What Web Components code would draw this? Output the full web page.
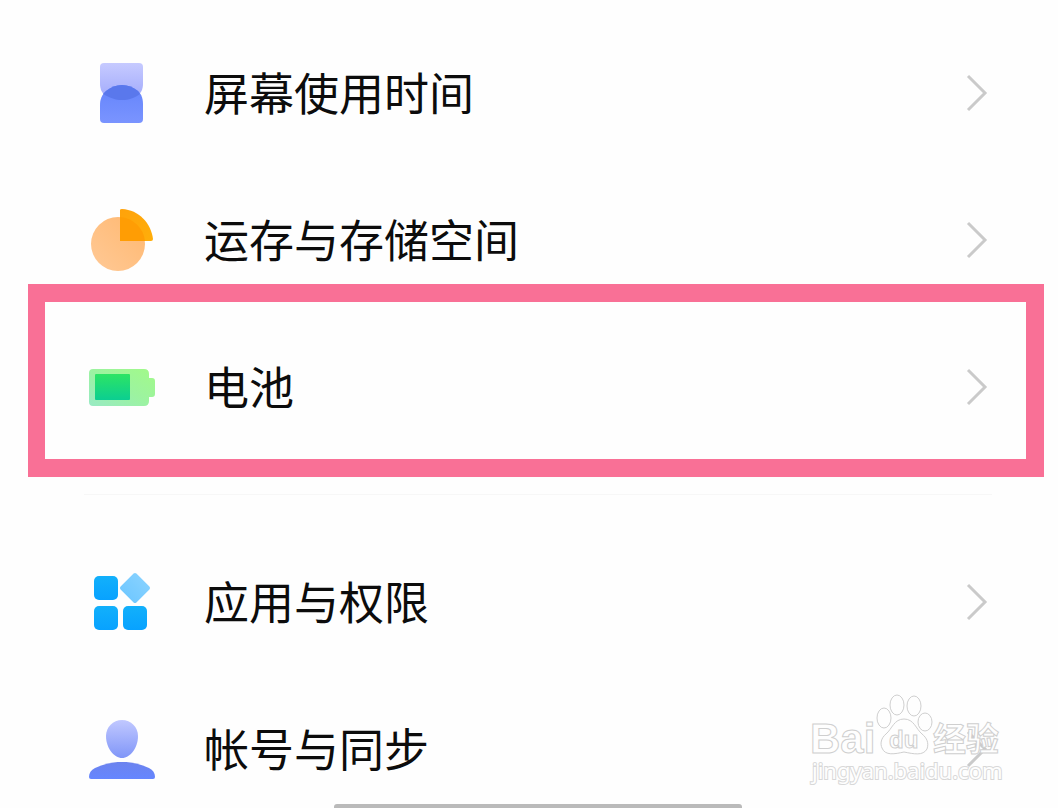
<!DOCTYPE html>
<html lang="zh-CN">
<head>
<meta charset="utf-8">
<meta name="viewport" content="width=device-width, initial-scale=1">
<title>设置</title>
<style>
html, body { margin: 0; height: 100%; }
body { background: #fefefe; color: #0c0c0c; overflow: hidden; font-family: "Noto Sans CJK SC", sans-serif; }
</style>
</head>
<body>
<settings-page>
  <settings-row icon="time">屏幕使用时间</settings-row>
  <settings-row icon="storage">运存与存储空间</settings-row>
  <settings-row icon="battery" marked>电池</settings-row>
  <settings-divider></settings-divider>
  <settings-row icon="apps">应用与权限</settings-row>
  <settings-row icon="account">帐号与同步</settings-row>
  <site-watermark slot="overlay"></site-watermark>
</settings-page>
<script>
const ICONS = {
  time: `<defs><linearGradient id="a" x2="0" y2="1"><stop stop-color="#c6caff"/><stop offset="1" stop-color="#a0a9fb"/></linearGradient>
    <linearGradient id="b" x2="0" y2="1"><stop stop-color="#6484fb"/><stop offset="1" stop-color="#7a94ff"/></linearGradient></defs>
    <path fill="url(#a)" d="M20 8H55Q59 8 59 12V29C59 34 57 38 54 40C49 43 45 45 38 45S27 43 21 40C18 38 16 34 16 29V12Q16 8 20 8Z"/>
    <path fill="url(#b)" d="M16 64V50C16 44 18 40 22 36C27 32 32 30 38 30S49 32 54 36C58 40 59 44 59 50V64Q59 68 55 68H20Q16 68 16 64Z"/>
    <path fill="#5a78ec" d="M22 36C27 32 32 30 38 30S49 32 54 36L56 39C50 43 45 45 38 45S27 43 19 39Z"/>`,
  storage: `<defs><linearGradient id="a" x1="1" x2="0" y2="1"><stop stop-color="#ffb870"/><stop offset="1" stop-color="#ffc996"/></linearGradient>
    <linearGradient id="b" x2="1" y2="1"><stop stop-color="#ffa20a"/><stop offset="1" stop-color="#ffae0a"/></linearGradient></defs>
    <circle cx="34" cy="42" r="27" fill="url(#a)"/>
    <path fill="url(#b)" d="M36 8Q36 7 38 7C55 8 67 21 69 37Q69 39 67 39H36Z"/>
    <path fill="#ff9d04" d="M36 15A27 27 0 0 1 61 39H36Z"/>`,
  battery: `<defs><linearGradient id="a" x1="1" x2="0" y2="1"><stop stop-color="#a2fa88"/><stop offset=".5" stop-color="#9cf3a0"/><stop offset="1" stop-color="#98eac4"/></linearGradient>
    <linearGradient id="b" x2="0" y2="1"><stop stop-color="#2de464"/><stop offset="1" stop-color="#0bce91"/></linearGradient></defs>
    <path fill="url(#a)" d="M9 20H60Q65 20 65 25V29H68Q71 29 71 32V45Q71 48 68 48H65V52Q65 57 60 57H9Q5 57 5 53V24Q5 20 9 20Z"/>
    <rect x="11" y="25" width="35" height="26" rx="1" fill="url(#b)"/>`,
  apps: `<defs><linearGradient id="a" x2="0" y2="1"><stop stop-color="#12b0fb"/><stop offset="1" stop-color="#08a2ff"/></linearGradient>
    <linearGradient id="b" x1="1" x2="0" y2="1"><stop stop-color="#8ad3ff"/><stop offset="1" stop-color="#6cc6ff"/></linearGradient></defs>
    <g fill="url(#a)"><rect x="10" y="12" width="24" height="24" rx="5"/><rect x="10" y="42" width="24" height="24" rx="5"/><rect x="39" y="42" width="24" height="24" rx="5"/></g>
    <path fill="url(#b)" stroke="url(#b)" stroke-width="4" stroke-linejoin="round" d="M51 11L64 24L51 37L38 24Z"/>`,
  account: `<defs><linearGradient id="a" x2="0" y2="1"><stop stop-color="#c1c8ff"/><stop offset="1" stop-color="#8096f8"/></linearGradient>
    <linearGradient id="b" x2="0" y2="1"><stop stop-color="#6c83ee"/><stop offset="1" stop-color="#6586ff"/></linearGradient></defs>
    <path fill="url(#a)" d="M38 9C47 9 54 16 54 25C54 37 46 47 38 47S22 37 22 25C22 16 29 9 38 9Z"/>
    <path fill="url(#b)" d="M5 66C5 62 7 59 11 57C19 53 28 51 38 51S57 53 65 57C69 59 71 62 71 66Q71 68 69 68H7Q5 68 5 66Z"/>`
};

class SettingsPage extends HTMLElement {
  constructor() {
    super();
    this.attachShadow({ mode: "open" }).innerHTML = `
      <style>
        :host { display: block; position: relative; height: 100vh; overflow: hidden; box-sizing: border-box; padding: 19px 66px 0 84px; }
        .handle { position: absolute; bottom: 0; left: 84px; right: 66px; height: 4px; display: flex; justify-content: center; }
        .handle::before { content: ""; width: 45%; background: #bababa; border-radius: 3px 3px 0 0; }
      </style>
      <main><slot></slot></main>
      <div class="handle"></div>
      <slot name="overlay"></slot>`;
  }
}
customElements.define("settings-page", SettingsPage);

class SettingsRow extends HTMLElement {
  connectedCallback() {
    if (this.shadowRoot) return;
    this.attachShadow({ mode: "open" }).innerHTML = `
      <style>
        :host { display: block; position: relative; }
        a { display: flex; align-items: center; height: 147px; color: inherit; text-decoration: none; font-size: 45px; line-height: 64px; }
        .icon { flex: none; width: 76px; height: 76px; margin-right: 44px; }
        .label { flex: 1; white-space: nowrap; padding-bottom: 2px; }
        .chevron { flex: none; width: 28px; height: 40px; }
        :host([marked]) { z-index: 1; }
        :host([marked])::after { content: ""; position: absolute; inset: -29px -52px -17px -56px; border: 18px solid #f97096; border-left-width: 17px; pointer-events: none; }
      </style>
      <a href="#${this.getAttribute("icon")}">
        <svg class="icon" viewBox="0 0 76 76" aria-hidden="true">${ICONS[this.getAttribute("icon")]}</svg>
        <span class="label"><slot></slot></span>
        <svg class="chevron" viewBox="0 0 28 40" aria-hidden="true"><path d="M4 3L21 20L4 37" fill="none" stroke="#cacaca" stroke-width="3"/></svg>
      </a>`;
  }
}
customElements.define("settings-row", SettingsRow);

class SettingsDivider extends HTMLElement {
  constructor() {
    super();
    this.attachShadow({ mode: "open" }).innerHTML = `
      <style>:host { display: block; padding: 34px 0 33px; } hr { margin: 0; border: 0; height: 1px; background: #f7f7f7; }</style><hr>`;
  }
}
customElements.define("settings-divider", SettingsDivider);

class SiteWatermark extends HTMLElement {
  constructor() {
    super();
    this.attachShadow({ mode: "open" }).innerHTML = `
      <style>
        :host { display: block; position: absolute; right: 54px; bottom: 20px; z-index: 2; pointer-events: none; }
        svg { display: block; width: 194px; height: 98px; overflow: visible; }
        text, .paw { fill: #fefefe; stroke: #cfcfcf; stroke-width: 1; }
        .latin { font: bold 42px "Liberation Sans", sans-serif; }
        .du { font: bold 24px "Liberation Sans", sans-serif; }
        .cjk { font: bold 33px "Noto Sans CJK SC", sans-serif; }
        .url { font: 22px "Noto Sans", sans-serif; stroke: #d8d8d8; stroke-width: 2; paint-order: stroke; }
      </style>
      <svg viewBox="810 690 194 98">
        <text class="latin" x="810" y="753">Bai</text>
        <g class="paw">
          <ellipse cx="884" cy="718" rx="7" ry="10"/>
          <ellipse cx="897" cy="705" rx="7" ry="10"/>
          <ellipse cx="914" cy="706" rx="7" ry="10"/>
          <ellipse cx="925" cy="722" rx="7" ry="9"/>
          <path d="M904 719C894 719 892 729 886 734C881 738 880 744 882 748C885 756 895 754 904 752C914 754 923 756 927 749C929 743 927 738 922 734C916 729 914 719 904 719Z"/>
        </g>
        <text class="du" x="889" y="748">du</text>
        <text class="cjk" x="933" y="751">经验</text>
        <text class="url" x="812" y="779">jingyan.baidu.com</text>
      </svg>`;
  }
}
customElements.define("site-watermark", SiteWatermark);
</script>
</body>
</html>
